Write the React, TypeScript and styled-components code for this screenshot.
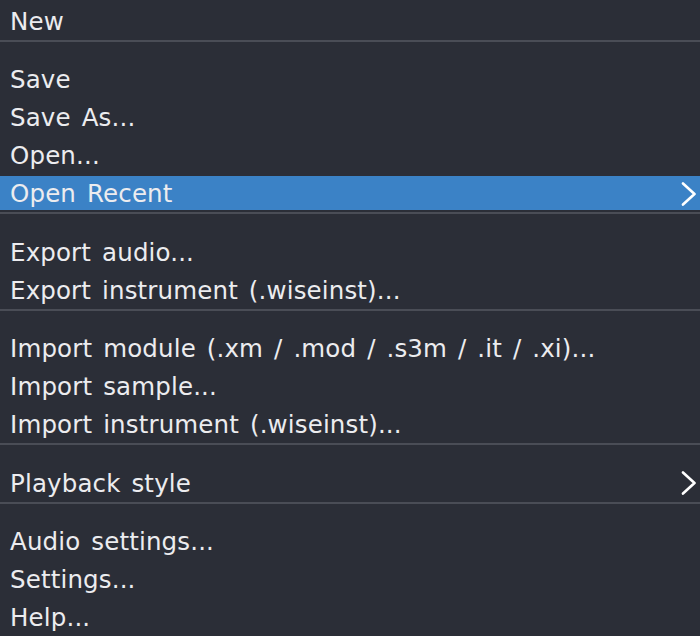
import React from 'react';
import styled, { createGlobalStyle } from 'styled-components';

const GlobalStyle = createGlobalStyle`
  html, body {
    margin: 0;
    padding: 0;
    background: #2b2e37;
  }
  body {
    font-family: "DejaVu Sans", Verdana, sans-serif;
  }
`;

const Menu = styled.div`
  width: 700px;
  height: 636px;
  overflow: hidden;
  background: #2b2e37;
  padding-top: 2px;
  box-sizing: border-box;
`;

const Item = styled.div<{ $active?: boolean }>`
  box-sizing: border-box;
  height: 38px;
  display: flex;
  align-items: center;
  justify-content: space-between;
  padding: 1px 3px 0 10px;
  border-top: 2px solid transparent;
  border-bottom: 2px solid transparent;
  font-size: 24.5px;
  letter-spacing: 0.15px;
  word-spacing: 3px;
  color: #ececef;
  background: ${p => (p.$active ? '#3b82c6' : 'transparent')};
  background-clip: padding-box;
  cursor: default;
`;

const Label = styled.span`
  white-space: nowrap;
`;

const Separator = styled.div`
  height: 2px;
  background: #4a4d56;
  margin-bottom: 18.4px;
`;

const Chevron = () => (
  <svg width="16" height="24" viewBox="0 0 16 24" fill="none">
    <path d="M2 1.5 L13.5 12 L2 22.5" stroke="#ffffff" strokeWidth="2.6" strokeLinecap="round" strokeLinejoin="round" />
  </svg>
);

type Entry = { label: string; sub?: boolean; active?: boolean } | 'sep';

const entries: Entry[] = [
  { label: 'New' },
  'sep',
  { label: 'Save' },
  { label: 'Save As...' },
  { label: 'Open...' },
  { label: 'Open Recent', sub: true, active: true },
  'sep',
  { label: 'Export audio...' },
  { label: 'Export instrument (.wiseinst)...' },
  'sep',
  { label: 'Import module (.xm / .mod / .s3m / .it / .xi)...' },
  { label: 'Import sample...' },
  { label: 'Import instrument (.wiseinst)...' },
  'sep',
  { label: 'Playback style', sub: true },
  'sep',
  { label: 'Audio settings...' },
  { label: 'Settings...' },
  { label: 'Help...' },
];

export default function App() {
  return (
    <>
      <GlobalStyle />
      <Menu>
        {entries.map((e, i) =>
          e === 'sep' ? (
            <Separator key={i} />
          ) : (
            <Item key={i} $active={e.active}>
              <Label>{e.label}</Label>
              {e.sub && <Chevron />}
            </Item>
          )
        )}
      </Menu>
    </>
  );
}
